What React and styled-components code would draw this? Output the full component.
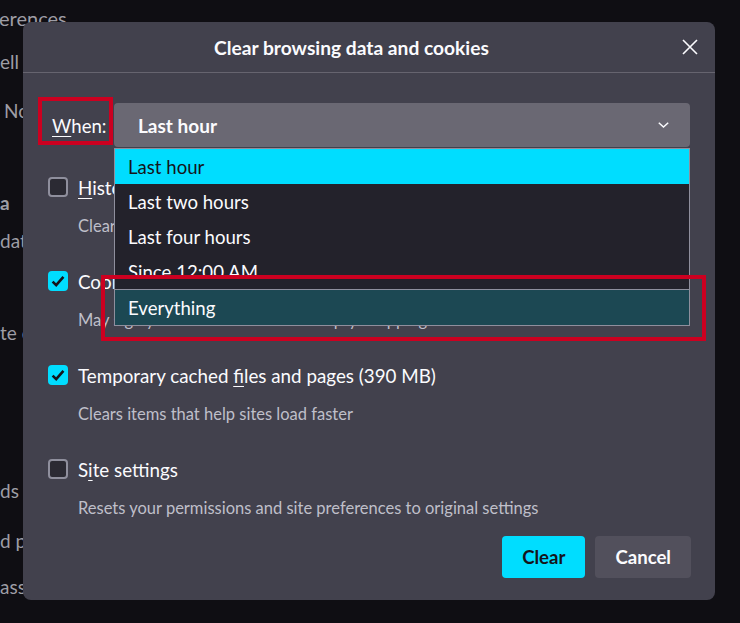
import React from 'react';
import styled, { createGlobalStyle } from 'styled-components';

const GlobalStyle = createGlobalStyle`
  html, body {
    margin: 0;
    padding: 0;
    background: #0f0e13;
  }
  body {
    font-family: Lato, "Open Sans", sans-serif;
  }
`;

const Page = styled.div`
  position: relative;
  width: 740px;
  height: 623px;
  overflow: hidden;
  background: #0f0e13;
`;

/* settings page that sits behind the modal */
const Backdrop = styled.div`
  display: flex;
  flex-direction: column;
  color: #9e9da5;
  white-space: nowrap;
`;

const BgLine = styled.div`
  margin-top: ${(p) => p.$gap}px;
  height: 20px;
  line-height: 20px;
  font-size: ${(p) => (p.$big ? 20 : 19)}px;
  font-weight: ${(p) => (p.$bold ? 700 : 400)};
`;

const Lead = styled.span`
  display: inline-block;
  width: 500px;
  text-align: right;
  margin-left: ${(p) => p.$at - 500}px;
`;

const Dialog = styled.div`
  position: absolute;
  left: 23px;
  top: 22px;
  width: 692px;
  height: 578px;
  box-sizing: border-box;
  display: flex;
  flex-direction: column;
  background: #42414d;
  border-radius: 8px;
  color: #fbfbfe;
`;

const Header = styled.div`
  height: 50px;
  display: flex;
  align-items: center;
  padding-right: 16px;
  border-bottom: 1px solid #66646f;
`;

const Title = styled.h1`
  flex: 1;
  margin: 0;
  text-align: center;
  font-size: 19.2px;
  font-weight: 700;
`;

const CloseButton = styled.button`
  width: 19px;
  height: 19px;
  padding: 0;
  border: none;
  background: none;
  color: #fbfbfe;
  display: flex;
  align-items: center;
  justify-content: center;
`;

const Body = styled.div`
  flex: 1;
  display: flex;
  flex-direction: column;
  padding: 30px 24px 22px 25px;
`;

const WhenRow = styled.div`
  display: flex;
  align-items: flex-start;
  margin-right: 1px;
`;

const Highlight = styled.div`
  border: 4px solid #cc0020;
  box-sizing: border-box;
`;

const WhenLabel = styled(Highlight)`
  width: 75px;
  height: 48px;
  margin: -6px 0 0 -10px;
  padding: 10px 0 0 10px;
  display: flex;
  align-items: center;
  font-size: 18.6px;
  white-space: nowrap;
`;

const Key = styled.span`
  text-decoration: underline;
  text-underline-offset: 3px;
`;

const SelectWrap = styled.div`
  position: relative;
  flex: 1;
  margin-left: 1px;
`;

const SelectButton = styled.div`
  height: 44px;
  display: flex;
  align-items: center;
  justify-content: space-between;
  padding: 0 21px 0 24px;
  background: #6a6873;
  border-radius: 4px;
  font-size: 19px;
  font-weight: 700;
`;

const Menu = styled.ul`
  position: absolute;
  top: 45px;
  left: 0;
  right: 0;
  margin: 0;
  padding: 0;
  list-style: none;
  background: #23222b;
  border: 1px solid #8f8f9d;
  z-index: 2;
`;

const MenuItem = styled.li`
  height: 35px;
  display: flex;
  align-items: center;
  padding-left: 13px;
  font-size: 18.6px;
  background: ${(p) => (p.$active ? '#00ddff' : p.$hover ? '#1c4853' : 'transparent')};
  color: ${(p) => (p.$active ? '#15141a' : '#fbfbfe')};
  overflow: hidden;
`;

const MenuSeparator = styled.li`
  height: 1px;
  background: #8f8f9d;
`;

const MenuHighlight = styled(Highlight)`
  position: absolute;
  left: -14px;
  top: 126px;
  width: 605px;
  height: 66px;
  pointer-events: none;
`;

const Options = styled.div`
  display: flex;
  flex-direction: column;
  gap: 33px;
  margin-top: 28px;
`;

const OptionRow = styled.label`
  height: 24px;
  display: flex;
  align-items: center;
  gap: 10px;
  font-size: 18.8px;
  white-space: nowrap;
`;

const Box = styled.span`
  width: 20px;
  height: 20px;
  box-sizing: border-box;
  border-radius: 4px;
  display: flex;
  align-items: center;
  justify-content: center;
  background: ${(p) => (p.$checked ? '#00ddff' : '#2b2a33')};
  border: ${(p) => (p.$checked ? 'none' : '2px solid #8f8f9d')};
`;

const Description = styled.div`
  margin-top: 17px;
  padding-left: 30px;
  line-height: 20px;
  font-size: 16.5px;
  color: #bfbfc9;
  white-space: nowrap;
`;

const Footer = styled.div`
  margin-top: auto;
  display: flex;
  justify-content: flex-end;
  gap: 10px;
`;

const Button = styled.button`
  height: 42px;
  padding: 0 20px;
  border: none;
  border-radius: 4px;
  font-family: inherit;
  font-size: 18.6px;
  font-weight: 700;
  background: ${(p) => (p.$primary ? '#00ddff' : '#52505c')};
  color: ${(p) => (p.$primary ? '#15141a' : '#fbfbfe')};
`;

const CloseIcon = () => (
  <svg width="16" height="16" viewBox="0 0 16 16">
    <path d="M1 1 L15 15 M15 1 L1 15" stroke="currentColor" strokeWidth="1.6" fill="none" />
  </svg>
);

const Chevron = () => (
  <svg width="11" height="6" viewBox="0 0 11 6">
    <path d="M0.8 0.8 L5.5 5 L10.2 0.8" stroke="#fbfbfe" strokeWidth="1.5" fill="none" />
  </svg>
);

const Check = () => (
  <svg width="20" height="20" viewBox="0 0 20 20">
    <path d="M4.6 10.6 L8.2 14.2 L15.4 5.8" stroke="#15141a" strokeWidth="2.6" fill="none" />
  </svg>
);

const ranges = ['Last hour', 'Last two hours', 'Last four hours', 'Since 12:00 AM'];

const options = [
  {
    label: (
      <>
        <Key>H</Key>istory
      </>
    ),
    desc: 'Clears sites and downloads',
    checked: false,
  },
  {
    label: <>Cookies and site data (1.2 GB)</>,
    desc: 'May sign you out of websites or empty shopping carts',
    checked: true,
  },
  {
    label: (
      <>
        Temporary cached <Key>f</Key>iles and pages (390 MB)
      </>
    ),
    desc: 'Clears items that help sites load faster',
    checked: true,
  },
  {
    label: (
      <>
        S<Key>i</Key>te settings
      </>
    ),
    desc: 'Resets your permissions and site preferences to original settings',
    checked: false,
  },
];

export default function App() {
  return (
    <Page>
      <GlobalStyle />
      <Backdrop>
        <BgLine $gap={8} $big>
          <Lead $at={-1}>Website Privacy Pref</Lead>erences
        </BgLine>
        <BgLine $gap={24}>
          <Lead $at={0}>Tell websites not to s</Lead>ell or share my data
        </BgLine>
        <BgLine $gap={29}>
          <Lead $at={4} />
          Notifications from websites
        </BgLine>
        <BgLine $gap={72} $bold>
          <Lead $at={0}>Cookies and Site Dat</Lead>a
        </BgLine>
        <BgLine $gap={18}>
          <Lead $at={0}>Your stored cookies, site </Lead>data, and cache are currently using
        </BgLine>
        <BgLine $gap={72}>
          <Lead $at={0}>Dele</Lead>te cookies and site data when Firefox is closed
        </BgLine>
        <BgLine $gap={138}>
          <Lead $at={0}>Ask to save passwor</Lead>ds
        </BgLine>
        <BgLine $gap={30}>
          <Lead $at={0}>Fill usernames an</Lead>d passwords automatically
        </BgLine>
        <BgLine $gap={26}>
          <Lead $at={0}>Suggest strong p</Lead>asswords
        </BgLine>
      </Backdrop>

      <Dialog>
        <Header>
          <Title>Clear browsing data and cookies</Title>
          <CloseButton aria-label="Close">
            <CloseIcon />
          </CloseButton>
        </Header>
        <Body>
          <WhenRow>
            <WhenLabel>
              <Key>W</Key>hen:
            </WhenLabel>
            <SelectWrap>
              <SelectButton>
                Last hour
                <Chevron />
              </SelectButton>
              <Menu>
                {ranges.map((r, i) => (
                  <MenuItem key={r} $active={i === 0}>
                    {r}
                  </MenuItem>
                ))}
                <MenuSeparator />
                <MenuItem $hover>Everything</MenuItem>
                <MenuHighlight />
              </Menu>
            </SelectWrap>
          </WhenRow>

          <Options>
            {options.map((o, i) => (
              <div key={i}>
                <OptionRow>
                  <Box $checked={o.checked}>{o.checked && <Check />}</Box>
                  <span>{o.label}</span>
                </OptionRow>
                <Description>{o.desc}</Description>
              </div>
            ))}
          </Options>

          <Footer>
            <Button $primary>Clear</Button>
            <Button>Cancel</Button>
          </Footer>
        </Body>
      </Dialog>
    </Page>
  );
}
